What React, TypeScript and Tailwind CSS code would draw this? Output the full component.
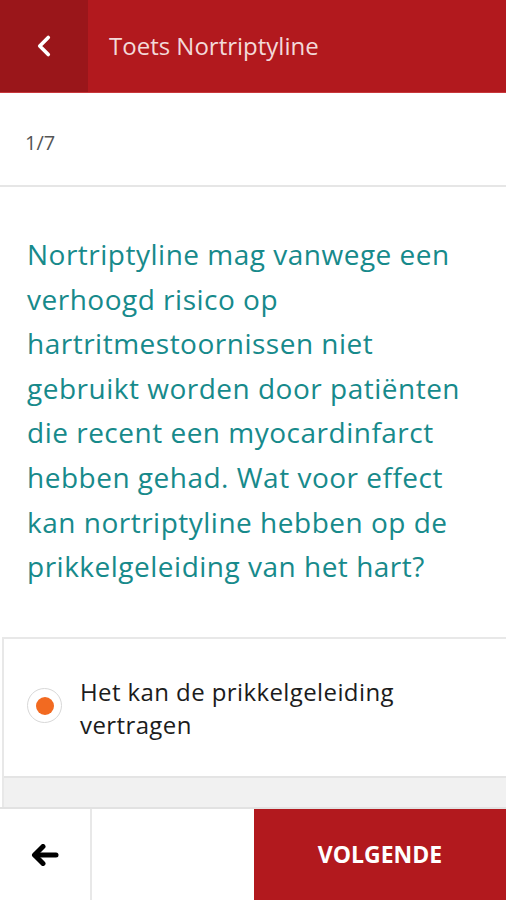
import { ChevronLeft } from "lucide-react";

const question =
  "Nortriptyline mag vanwege een verhoogd risico op hartritmestoornissen niet gebruikt worden door patiënten die recent een myocardinfarct hebben gehad. Wat voor effect kan nortriptyline hebben op de prikkelgeleiding van het hart?";

function Header() {
  return (
    <div className="flex h-[93px] shrink-0 bg-[#b2191e] border-b border-[#c8373b]">
      <button className="flex w-[88px] items-center justify-center bg-[#9a161a] text-white">
        <ChevronLeft size={34} strokeWidth={2.6} />
      </button>
      <div className="flex items-center pl-[21px] text-[24px] text-[#f3d9d9]">
        Toets Nortriptyline
      </div>
    </div>
  );
}

function AnswerOption({ label, checked }: { label: string; checked?: boolean }) {
  return (
    <div className="flex h-[137px] items-center gap-[18px] pl-[23px] pr-[40px] bg-white">
      <span className="mb-[4px] flex h-[35px] w-[35px] shrink-0 items-center justify-center rounded-full border border-[#d8d8d8] bg-white">
        {checked && <span className="h-[18px] w-[18px] rounded-full bg-[#f26a21]" />}
      </span>
      <span className="text-[24px] leading-[33px] tracking-[0.4px] text-[#1c1c1c]">{label}</span>
    </div>
  );
}

export default function App() {
  return (
    <div
      className="flex h-[900px] w-[506px] flex-col bg-white"
      style={{ fontFamily: '"Open Sans", sans-serif' }}
    >
      <Header />

      <div className="flex h-[94px] shrink-0 items-center border-b-2 border-[#e6e6e6] pl-[25px] pt-[8px] text-[20px] text-[#555]">
        1/7
      </div>

      <p className="pl-[27px] pr-[34px] pt-[45px] text-[28px] font-medium leading-[44.6px] tracking-[0.5px] text-[#178a8b]">
        {question}
      </p>

      <div className="mt-auto ml-[2px] border-l-2 border-t-2 border-[#e8e8e8]">
        <AnswerOption label="Het kan de prikkelgeleiding vertragen" checked />
        <div className="h-[31px] border-t-2 border-[#e4e4e4] bg-[#f1f1f1]" />
      </div>

      <div className="flex h-[93px] shrink-0 border-t-2 border-[#e2e2e2]">
        <button className="flex w-[92px] items-center justify-center border-r-2 border-[#e8e8e8] text-black">
          <svg width="28" height="22" viewBox="0 0 28 22" fill="none">
            <path d="M12 2.5 L3.5 11 L12 19.5" stroke="black" strokeWidth="5" strokeLinecap="round" strokeLinejoin="round" />
            <path d="M4 11 H25" stroke="black" strokeWidth="5" strokeLinecap="round" />
          </svg>
        </button>
        <div className="flex-1" />
        <button className="flex w-[252px] items-center justify-center bg-[#b2191e] text-[23px] font-bold text-white">
          VOLGENDE
        </button>
      </div>
    </div>
  );
}
